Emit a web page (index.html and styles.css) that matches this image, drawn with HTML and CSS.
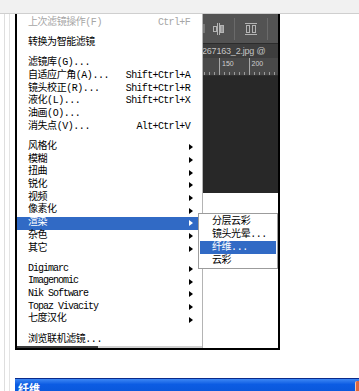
FILE: index.html
```html
<!DOCTYPE html>
<html lang="zh-CN">
<head>
  <meta charset="UTF-8" />
  <title>滤镜菜单</title>
  <link rel="stylesheet" href="styles.css">
</head>
<body>
  <div class="topbar"></div>
  <div class="page">
    <div class="gutter"><div class="gutter-lines"></div></div>
    <div class="work">
      <div class="frame">
        <!-- Filter menu -->
        <div class="menu">
          <div class="item disabled first"><span class="label">上次滤镜操作(F)</span><span class="key">Ctrl+F</span></div>
          <div class="sep"></div>
          <div class="item"><span class="label">转换为智能滤镜</span></div>
          <div class="sep"></div>
          <div class="item"><span class="label">滤镜库(G)...</span></div>
          <div class="item"><span class="label">自适应广角(A)...</span><span class="key">Shift+Ctrl+A</span></div>
          <div class="item"><span class="label">镜头校正(R)...</span><span class="key">Shift+Ctrl+R</span></div>
          <div class="item"><span class="label">液化(L)...</span><span class="key">Shift+Ctrl+X</span></div>
          <div class="item"><span class="label">油画(O)...</span></div>
          <div class="item"><span class="label">消失点(V)...</span><span class="key">Alt+Ctrl+V</span></div>
          <div class="sep"></div>
          <div class="item"><span class="label">风格化</span><i class="arrow"></i></div>
          <div class="item"><span class="label">模糊</span><i class="arrow"></i></div>
          <div class="item"><span class="label">扭曲</span><i class="arrow"></i></div>
          <div class="item"><span class="label">锐化</span><i class="arrow"></i></div>
          <div class="item"><span class="label">视频</span><i class="arrow"></i></div>
          <div class="item"><span class="label">像素化</span><i class="arrow"></i></div>
          <div class="item active"><span class="label">渲染</span><i class="arrow"></i></div>
          <div class="item"><span class="label">杂色</span><i class="arrow"></i></div>
          <div class="item"><span class="label">其它</span><i class="arrow"></i></div>
          <div class="sep"></div>
          <div class="item"><span class="label latin">Digimarc</span><i class="arrow"></i></div>
          <div class="item"><span class="label latin">Imagenomic</span><i class="arrow"></i></div>
          <div class="item"><span class="label latin">Nik Software</span><i class="arrow"></i></div>
          <div class="item"><span class="label latin">Topaz Vivacity</span><i class="arrow"></i></div>
          <div class="item"><span class="label">七度汉化</span><i class="arrow"></i></div>
          <div class="sep"></div>
          <div class="item"><span class="label">浏览联机滤镜...</span></div>
          <div class="menu-end"><span></span></div>
        </div>

        <!-- Photoshop window behind the menu -->
        <div class="side">
          <div class="ps">
            <div class="ps-tools">
              <span class="tool-edge"></span>
              <svg class="tool" width="11" height="14" viewBox="0 0 11 14">
                <rect x="0.5" y="4.5" width="3" height="5" fill="none" stroke="#b4b4b4"/>
                <line x1="4.5" y1="1" x2="4.5" y2="13" stroke="#b4b4b4"/>
                <line x1="6.5" y1="1" x2="6.5" y2="13" stroke="#b4b4b4"/>
                <rect x="7.5" y="3.5" width="3" height="7" fill="#9a9a9a" stroke="#b4b4b4"/>
              </svg>
              <span class="tool-sep"></span>
              <svg class="tool" width="12" height="14" viewBox="0 0 12 14">
                <line x1="0" y1="1.5" x2="12" y2="1.5" stroke="#b4b4b4"/>
                <rect x="1.5" y="3.5" width="3" height="7" fill="none" stroke="#b4b4b4"/>
                <rect x="7.5" y="3.5" width="3" height="7" fill="none" stroke="#b4b4b4"/>
                <line x1="0" y1="12.5" x2="12" y2="12.5" stroke="#b4b4b4"/>
              </svg>
              <span class="tool-sep"></span>
            </div>
            <div class="ps-tab">267163_2.jpg @</div>
            <div class="ps-ruler">
              <span class="tick">150</span>
              <span class="tick">200</span>
            </div>
            <div class="ps-canvas"></div>
          </div>
        </div>

        <!-- Render submenu -->
        <div class="submenu">
          <div class="sub-item">分层云彩</div>
          <div class="sub-item">镜头光晕...</div>
          <div class="sub-item active">纤维...</div>
          <div class="sub-item">云彩</div>
        </div>
      </div>

      <div class="titlebar">
        <span class="title">纤维</span>
        <i class="close"></i>
      </div>
    </div>
  </div>
</body>
</html>
```

FILE: styles.css
```css
body {
  margin: 0;
  width: 359px;
  height: 391px;
  overflow: hidden;
  background-color: #ffffff;
  font-family: "Liberation Mono", "Noto Sans CJK SC", monospace;
  font-size: 10px;
  color: #000;
}
.topbar {
  height: 13px;
  background-color: #f1f1f1;
  border-bottom: 1px solid #cfcfcf;
}
.page {
  display: flex;
  height: 377px;
}
.gutter {
  width: 15px;
  padding-left: 4px;
  box-sizing: border-box;
}
.gutter-lines {
  width: 4px;
  height: 100%;
  border-left: 1px solid #dedede;
  border-right: 1px solid #e4e4e4;
}
.work {
  flex: 1;
  display: flex;
  flex-direction: column;
}
.frame {
  position: relative;
  display: flex;
  width: 261px;
  height: 334px;
  border: 2px solid #000;
  border-top: none;
}

/* menu */
.menu {
  width: 185px;
  border-right: 1px solid #b4b4b4;
  display: flex;
  flex-direction: column;
  padding-top: 3px;
}
.item {
  display: flex;
  align-items: center;
  height: 12.7px;
  line-height: 12.7px;
  padding: 0 5px 0 11px;
  letter-spacing: -0.45px;
  white-space: nowrap;
}
.item .label {
  flex: 1;
}
.item .latin {
  letter-spacing: -1px;
}
.item .key {
  margin-right: 7px;
  letter-spacing: -0.65px;
}
.item.disabled {
  color: #a6a6a6;
}
.item.active {
  background-color: #316ac5;
  color: #fff;
}
.arrow {
  width: 0;
  height: 0;
  margin-right: 4px;
  border-left: 4px solid #000;
  border-top: 3px solid transparent;
  border-bottom: 3px solid transparent;
}
.item.active .arrow {
  border-left-color: #fff;
}
.sep {
  height: 1px;
  margin: 3px 1px 3.5px 1px;
  background-color: #c4c4c4;
  border-bottom: 1px solid #fff;
}
.menu-end {
  margin-top: auto;
  height: 2px;
  background-color: #d0d0d0;
}
.menu-end span {
  display: block;
  width: 81px;
  height: 2px;
  background-color: #3c3c3c;
}

/* photoshop window */
.side {
  width: 75px;
}
.ps {
  height: 179px;
  display: flex;
  flex-direction: column;
  background-color: #282828;
  font-family: "Liberation Sans", Arial, sans-serif;
}
.ps-tools {
  height: 29px;
  display: flex;
  align-items: center;
  background-color: #535353;
  border-bottom: 1px solid #2c2c2c;
}
.tool-edge {
  width: 2px;
  height: 9px;
  margin-right: 8px;
  background-color: #7a7a7a;
}
.tool {
  display: block;
}
.tool-sep {
  width: 1px;
  height: 22px;
  margin: 0 10px;
  background-color: #6a6a6a;
}
.ps-tab {
  height: 14px;
  line-height: 14px;
  background-color: #3e3e3e;
  color: #c4c4c4;
  font-size: 9px;
  letter-spacing: -0.2px;
  white-space: nowrap;
  overflow: hidden;
  text-indent: -1px;
}
.ps-ruler {
  height: 17px;
  display: flex;
  padding-left: 16px;
  background-color: #494949;
  background-image: repeating-linear-gradient(90deg, #9a9a9a 0 1px, transparent 1px 5px);
  background-size: 100% 3px;
  background-repeat: no-repeat;
  background-position: 1px bottom;
  border-bottom: 1px solid #303030;
}
.tick {
  width: 40px;
  border-left: 1px solid #a8a8a8;
  padding: 2px 0 0 2px;
  font-size: 7px;
  line-height: 8px;
  color: #d0d0d0;
}
.ps-canvas {
  flex: 1;
}

/* submenu */
.submenu {
  position: absolute;
  left: 181px;
  top: 199px;
  width: 78px;
  padding: 1px 0;
  background-color: #fff;
  border: 1px solid #9c9c9c;
}
.sub-item {
  height: 13px;
  line-height: 13px;
  margin: 0 1px;
  padding-left: 12px;
  letter-spacing: -0.45px;
  white-space: nowrap;
}
.sub-item.active {
  background-color: #316ac5;
  color: #fff;
}

/* dialog title bar */
.titlebar {
  margin-top: 28px;
  height: 12px;
  display: flex;
  border-top: 1px solid #0a2a8a;
  background: linear-gradient(#3d87f4, #0c5ce3 45%, #0a58dc);
  overflow: hidden;
}
.title {
  padding: 3px 0 0 3px;
  font-family: "Noto Sans CJK SC", sans-serif;
  font-weight: bold;
  font-size: 11px;
  line-height: 12px;
  color: #fff;
}
.close {
  margin: 2px 0 0 auto;
  width: 3px;
  background-color: #e0673f;
  border-left: 1px solid #f4c3a8;
  border-radius: 2px 0 0 0;
}
```
